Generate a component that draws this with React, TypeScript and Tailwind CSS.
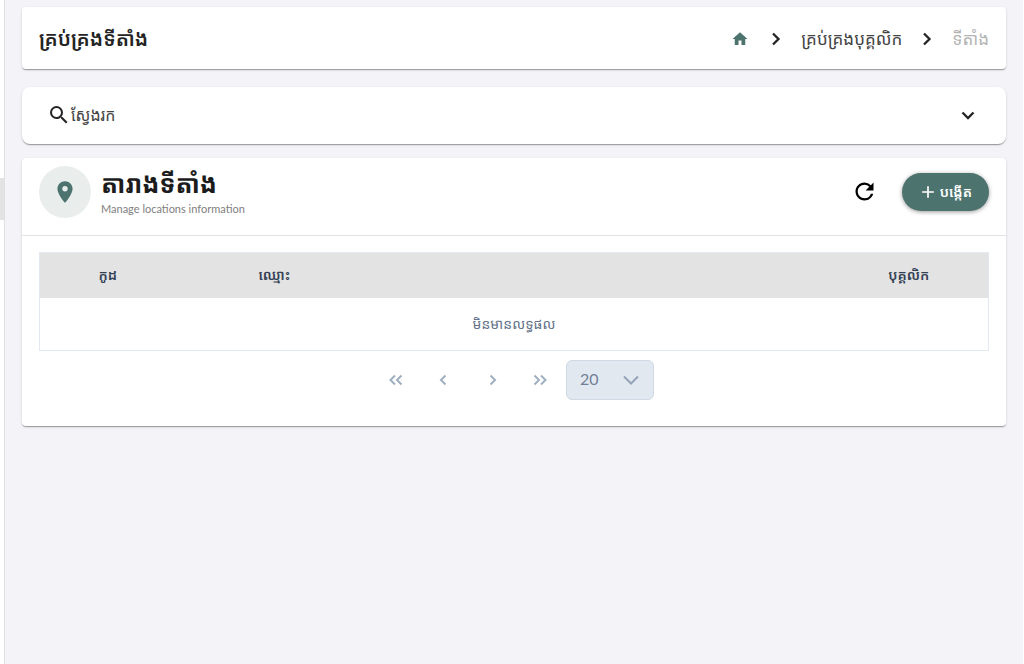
import type { ReactNode } from 'react';
import { MdAdd, MdHome, MdLocationOn, MdRefresh, MdSearch } from 'react-icons/md';

type StrokeProps = { d: string; className: string; width?: number };

function Stroke({ d, className, width = 2 }: StrokeProps) {
  return (
    <svg viewBox="0 0 16 16" fill="none" stroke="currentColor" strokeWidth={width} className={className} aria-hidden="true">
      <path d={d} />
    </svg>
  );
}

function PageButton({ label, children }: { label: string; children: ReactNode }) {
  return (
    <button type="button" disabled aria-label={label} className="flex size-10 items-center justify-center text-[#a0afc0]">
      {children}
    </button>
  );
}

const card = 'bg-white shadow-[0_2px_1px_-1px_rgba(0,0,0,0.2),0_1px_1px_0_rgba(0,0,0,0.14),0_1px_3px_0_rgba(0,0,0,0.12)]';

export default function App() {
  return (
    <div className="flex min-h-screen bg-[#f3f3f8] font-[Lato,'Noto_Sans_Khmer','Noto_Sans',sans-serif] text-[#242424]">
      <aside className="w-[5px] shrink-0 border-r border-[#e0e0e2] bg-white pt-[178px]">
        <div className="h-[42px] bg-[#e3e3e3]" />
      </aside>

      <main className="min-w-0 flex-1 border-r border-white px-[17px] pt-[7px]">
        <header className={`${card} flex h-[62px] items-center justify-between rounded px-[17px]`}>
          <h1 className="text-xl font-semibold">គ្រប់គ្រងទីតាំង</h1>
          <nav aria-label="Breadcrumb" className="flex items-center pt-[2px] text-[17px]">
            <a href="#home" aria-label="Home" className="text-[#4d736e]">
              <MdHome className="size-[18px]" />
            </a>
            <Stroke d="M5 2.500 10.500 8 5 13.500" width={2.3} className="mr-[17px] ml-[19px] size-4" />
            <a href="#staff" className="text-[#444]">គ្រប់គ្រងបុគ្គលិក</a>
            <Stroke d="M5 2.500 10.500 8 5 13.500" width={2.3} className="mx-[17px] size-4" />
            <span aria-current="page" className="text-[#b5b5b5]">ទីតាំង</span>
          </nav>
        </header>

        <button type="button" aria-expanded="false" className={`${card} mt-[18px] flex h-[57px] w-full items-center rounded-lg pr-[30px] pb-[2px] pl-[25px]`}>
          <MdSearch className="size-6" />
          <span className="text-base text-[#444]">ស្វែងរក</span>
          <Stroke d="M2.500 5.500 8 11 13.500 5.500" width={2.3} className="ml-auto size-4" />
        </button>

        <section className={`${card} mt-[14px] rounded pb-[26px]`}>
          <div className="flex h-[78px] items-start border-b border-[#e2e2e4] px-[17px] pt-2">
            <div className="flex size-[52px] shrink-0 items-center justify-center rounded-full bg-[#e9eeed] text-[#4d736e]">
              <MdLocationOn className="size-[26px]" />
            </div>
            <div className="ml-[10px]">
              <h2 className="h-[35px] text-[25px] leading-[35px] font-bold text-[#1c1c1c]">តារាងទីតាំង</h2>
              <p className="text-[11px] leading-4 text-[#808080]">Manage locations information</p>
            </div>
            <button type="button" aria-label="Refresh" className="mt-3 ml-auto text-black">
              <MdRefresh className="size-[27px]" />
            </button>
            <button
              type="button"
              className="mt-[7px] ml-6 flex h-[38px] items-center gap-[2px] rounded-full bg-[#4d736e] pr-[17px] pl-4 text-sm font-semibold text-white shadow-[0_1px_4px_rgba(0,0,0,0.4)]"
            >
              <MdAdd className="size-5" />
              បង្កើត
            </button>
          </div>

          <div className="px-[17px] pt-4">
            <table className="w-full table-fixed border-collapse border border-[#e4e9f1] text-sm text-[#64748b]">
              <thead>
                <tr className="h-[45px] bg-[#e3e3e3] text-[#334155]">
                  <td className="w-[52px]" />
                  <th scope="col" className="w-[160px] px-[7px] text-left font-semibold">កូដ</th>
                  <th scope="col" className="px-[7px] text-left font-semibold">ឈ្មោះ</th>
                  <th scope="col" className="w-[159px] text-center font-semibold">បុគ្គលិក</th>
                </tr>
              </thead>
              <tbody>
                <tr className="h-[53px]">
                  <td colSpan={4} className="text-center">មិនមានលទ្ធផល</td>
                </tr>
              </tbody>
            </table>

            <div className="mt-[9px] flex items-center justify-center gap-[6px] pl-[2px]">
              <div className="flex gap-2">
                <PageButton label="First page">
                  <Stroke d="M7 3.500 2.500 8 7 12.500M13.500 3.500 9 8l4.500 4.500" className="size-4" />
                </PageButton>
                <PageButton label="Previous page">
                  <Stroke d="M9.500 3.500 5 8l4.500 4.500" className="size-4" />
                </PageButton>
                <PageButton label="Next page">
                  <Stroke d="M6.500 3.500 11 8l-4.500 4.500" className="size-4" />
                </PageButton>
                <PageButton label="Last page">
                  <Stroke d="M2.500 3.500 7 8l-4.500 4.500M9 3.500 13.500 8 9 12.500" className="size-4" />
                </PageButton>
              </div>
              <div className="grid items-center">
                <select
                  aria-label="Rows per page"
                  className="col-start-1 row-start-1 h-10 w-[88px] appearance-none rounded-md border border-[#cfd9e5] bg-[#e2e8f0] pb-[2px] pl-[13px] text-base text-[#718096]"
                >
                  <option>20</option>
                </select>
                <Stroke d="M1 4.500 8 11.500 15 4.500" className="pointer-events-none col-start-1 row-start-1 mr-[15px] size-4 justify-self-end text-[#94a3b8]" />
              </div>
            </div>
          </div>
        </section>
      </main>
    </div>
  );
}
